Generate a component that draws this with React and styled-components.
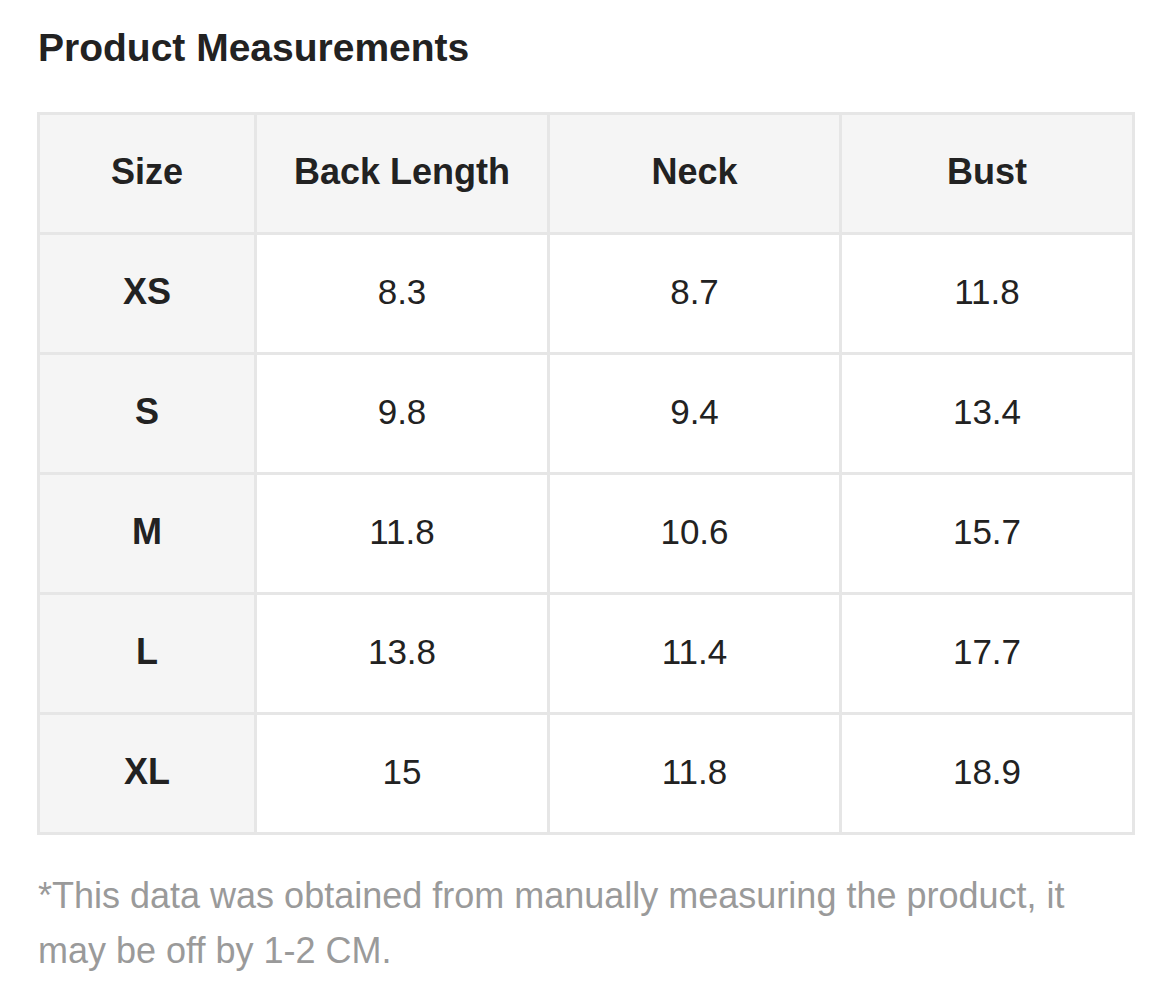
import React from "react";
import styled, { createGlobalStyle } from "styled-components";

const Global = createGlobalStyle`
  html, body { margin: 0; padding: 0; background: #fff; }
  body { font-family: "Liberation Sans", Arial, Helvetica, sans-serif; color: #222; }
`;

const Page = styled.div`
  padding: 26px 37px 0 37px;
`;

const Title = styled.h2`
  margin: 0 0 0 1px;
  font-family: "Liberation Sans", Arial, sans-serif;
  font-size: 39px;
  line-height: 44px;
  font-weight: 700;
  color: #222;
`;

const Table = styled.table`
  margin-top: 42px;
  width: 1096px;
  border-collapse: collapse;
  table-layout: fixed;
`;

const Cell = styled.td`
  border: 3px solid #e6e6e6;
  height: 113px;
  padding: 0 0 4px 0;
  text-align: center;
  vertical-align: middle;
  font-family: "Liberation Sans", Arial, sans-serif;
  font-size: ${(p) => (p.$head ? "36px" : "35px")};
  font-weight: ${(p) => (p.$head ? 700 : 400)};
  background: ${(p) => (p.$head ? "#f5f5f5" : "#fff")};
  color: #222;
`;

const Note = styled.p`
  margin: 33px 0 0 1px;
  font-family: "Liberation Sans", Arial, sans-serif;
  font-size: 36px;
  line-height: 55px;
  color: #9a9a9a;
  width: 1060px;
`;

const headers = ["Size", "Back Length", "Neck", "Bust"];
const rows = [
  ["XS", "8.3", "8.7", "11.8"],
  ["S", "9.8", "9.4", "13.4"],
  ["M", "11.8", "10.6", "15.7"],
  ["L", "13.8", "11.4", "17.7"],
  ["XL", "15", "11.8", "18.9"],
];
const widths = [217, 293, 292, 293];

export default function App() {
  return (
    <Page>
      <Global />
      <Title>Product Measurements</Title>
      <Table>
        <colgroup>
          {widths.map((w, i) => (
            <col key={i} style={{ width: w }} />
          ))}
        </colgroup>
        <thead>
          <tr>
            {headers.map((h) => (
              <Cell as="th" key={h} $head>
                {h}
              </Cell>
            ))}
          </tr>
        </thead>
        <tbody>
          {rows.map((r) => (
            <tr key={r[0]}>
              {r.map((v, i) => (
                <Cell key={i} $head={i === 0}>
                  {v}
                </Cell>
              ))}
            </tr>
          ))}
        </tbody>
      </Table>
      <Note>
        *This data was obtained from manually measuring the product, it may be off by 1-2 CM.
      </Note>
    </Page>
  );
}
